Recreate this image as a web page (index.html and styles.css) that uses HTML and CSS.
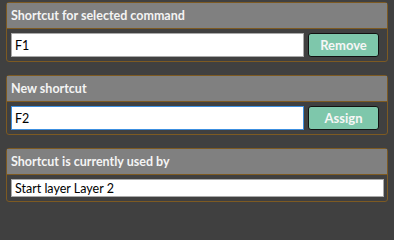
FILE: index.html
```html
<!DOCTYPE html>
<html>
<head>
<meta charset="utf-8">
<link rel="stylesheet" href="styles.css">
</head>
<body>
<div class="panel">
  <section class="group">
    <div class="group-header">Shortcut for selected command</div>
    <div class="group-body">
      <div class="input">F1</div>
      <button class="btn">Remove</button>
    </div>
  </section>
  <section class="group">
    <div class="group-header">New shortcut</div>
    <div class="group-body">
      <div class="input focused">F2</div>
      <button class="btn">Assign</button>
    </div>
  </section>
  <section class="group">
    <div class="group-header">Shortcut is currently used by</div>
    <div class="group-body">
      <div class="input small">Start layer Layer 2</div>
    </div>
  </section>
</div>
</body>
</html>
```
FILE: styles.css
```css
html, body {
  margin: 0;
  padding: 0;
  background: #404040;
  width: 394px;
  height: 211px;
  overflow: hidden;
}
.panel {
  display: flex;
  flex-direction: column;
  gap: 13px;
  padding: 2px 6px 0 6px;
  font-family: "Lato", "Noto Sans", sans-serif;
}
.group {
  border: 1px solid #7d5a22;
  border-radius: 3px;
  background: #404040;
}
.group-header {
  height: 25px;
  background: #808080;
  border-bottom: 1px solid #7d5a22;
  color: #f4f4f4;
  font-weight: 700;
  font-size: 12.5px;
  display: flex;
  align-items: center;
  padding-left: 4px;
}
.group-body {
  display: flex;
  gap: 4px;
  padding: 4px 3px 4px 4px;
}
.input {
  flex: 1;
  height: 24px;
  box-sizing: border-box;
  background: #ffffff;
  border: 1px solid #a9a9a9;
  color: #000;
  font-size: 12.5px;
  display: flex;
  align-items: center;
  padding-left: 3px;
}
.input.focused {
  border-color: #3c8fe0;
}
.input.small {
  height: 18px;
}
.btn {
  width: 71px;
  height: 24px;
  margin-right: 5px;
  background: #7ec7ab;
  border: 1px solid #111;
  border-radius: 3px;
  color: #f6f6f6;
  font-family: "Lato", "Noto Sans", sans-serif;
  font-weight: 700;
  font-size: 13px;
  padding: 0;
}
```
